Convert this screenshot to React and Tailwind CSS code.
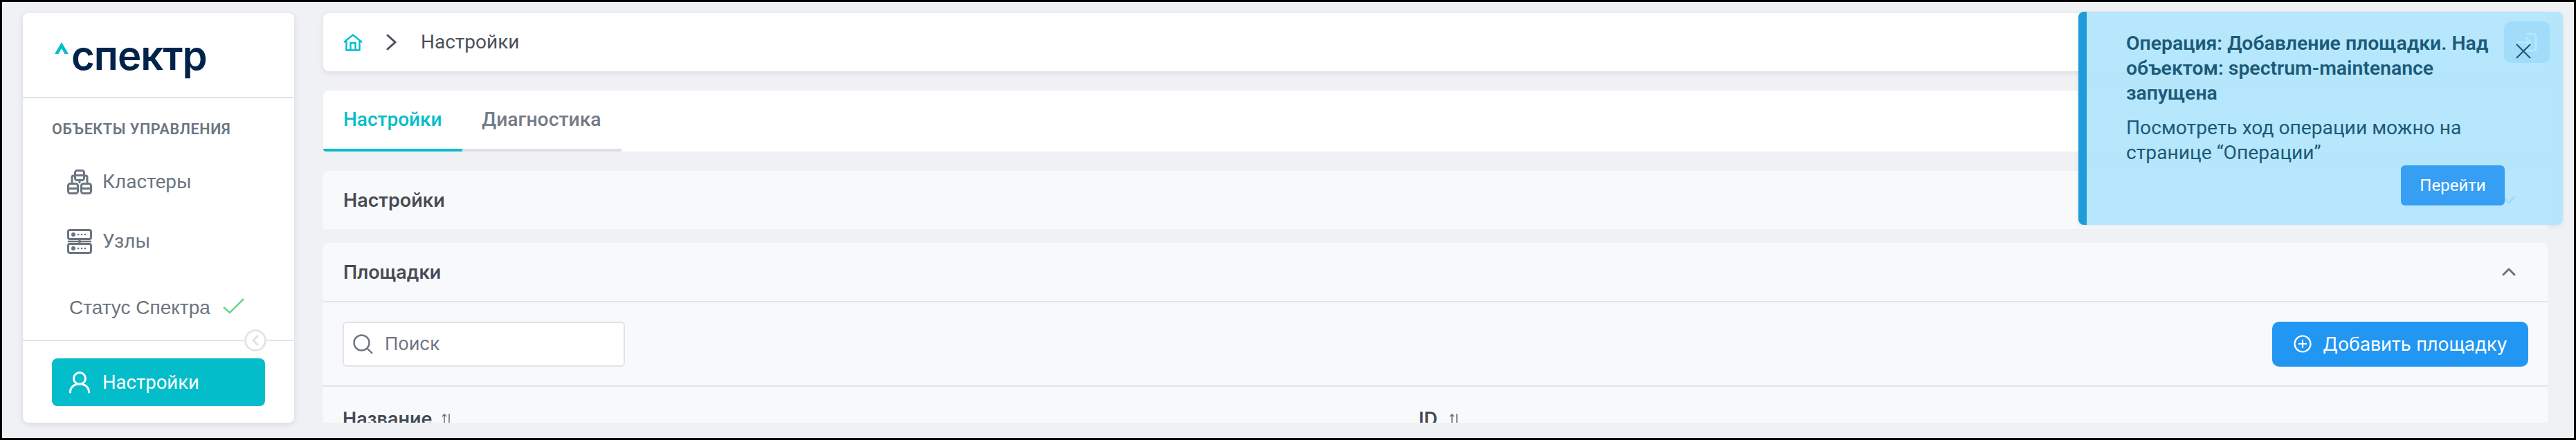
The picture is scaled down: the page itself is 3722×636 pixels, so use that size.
import React from "react";

const roboto = "font-['Roboto',sans-serif]";
const inter = "font-['Inter',sans-serif]";

function ClusterIcon() {
  return (
    <svg width="36" height="36" viewBox="0 0 36 36" fill="none" stroke="#6b7580" strokeWidth="3" strokeLinejoin="round" className="shrink-0">
      <rect x="11.5" y="1.5" width="13" height="14" rx="3" />
      <path d="M11.5 8.5h13" />
      <path d="M11.5 9H9a2 2 0 0 0-2 2v9M24.5 9H27a2 2 0 0 1 2 2v9" />
      <path d="M18 15.5V20" />
      <rect x="1.5" y="20.5" width="14" height="14" rx="3" />
      <path d="M1.5 27.5h14" />
      <rect x="20.5" y="20.5" width="14" height="14" rx="3" />
      <path d="M20.5 27.5h14" />
    </svg>
  );
}

function ServerIcon() {
  return (
    <svg width="36" height="36" viewBox="0 0 36 36" fill="none" stroke="#6b7580" className="shrink-0">
      <rect x="1.5" y="1.5" width="33" height="13" rx="2.5" strokeWidth="3" />
      <rect x="1.5" y="21.5" width="33" height="13" rx="2.5" strokeWidth="3" />
      <path d="M18 15v6" strokeWidth="3" />
      <path d="M1 18h34" strokeWidth="2.5" />
      <g fill="#6b7580" stroke="none">
        <circle cx="9" cy="8" r="3" />
        <circle cx="16" cy="8" r="1.3" />
        <circle cx="21" cy="8" r="1.3" />
        <circle cx="26" cy="8" r="1.3" />
        <circle cx="9" cy="28" r="3" />
        <circle cx="16" cy="28" r="1.3" />
        <circle cx="21" cy="28" r="1.3" />
        <circle cx="26" cy="28" r="1.3" />
      </g>
    </svg>
  );
}

function SortIcon() {
  return (
    <svg width="14" height="18" viewBox="0 0 14 18" fill="none" stroke="#6b7580" strokeWidth="1.6" className="shrink-0">
      <path d="M4 17V2M1 5l3-3 3 3" />
      <path d="M11 1v16" />
    </svg>
  );
}

function Chevron({ d, className }) {
  return (
    <svg width="20" height="12" viewBox="0 0 20 12" fill="none" stroke="#6b7280" strokeWidth="3" strokeLinecap="round" strokeLinejoin="round" className={className}>
      <path d={d} />
    </svg>
  );
}

function NavItem({ icon, label }) {
  return (
    <div className="flex h-[36px] items-center gap-[15px] pl-[64px]">
      {icon}
      <span className={`${roboto} text-[28px] leading-none text-[#6b7580]`}>{label}</span>
    </div>
  );
}

function Sidebar() {
  return (
    <aside className="flex w-[392px] shrink-0 flex-col rounded-[8px] bg-white shadow-[0_2px_8px_rgba(30,40,60,0.12)]">
      <div className="flex h-[123px] shrink-0 items-start border-b-2 border-[#dfe3e8] pl-[46px] pt-[34px]">
        <svg width="20" height="17" viewBox="0 0 20 17" className="mt-[8px] shrink-0">
          <path d="M10 0l10 17h-5.5L10 9l-4.500 8H0z" fill="#04bdca" />
        </svg>
        <span className={`${inter} -mt-[6px] ml-[4px] text-[58px] font-semibold leading-[66px] tracking-[-1px] text-[#00234b]`}>спектр</span>
      </div>
      <div className="flex flex-1 flex-col">
        <div className={`${roboto} ml-[42px] mt-[32px] text-[21.5px] font-semibold leading-[26px] tracking-[0.6px] text-[#6b7580]`}>
          ОБЪЕКТЫ УПРАВЛЕНИЯ
        </div>
        <div className="mt-[45px] flex flex-col gap-[50px]">
          <NavItem icon={<ClusterIcon />} label="Кластеры" />
          <NavItem icon={<ServerIcon />} label="Узлы" />
        </div>
        <div className="ml-[67px] mt-[63px] flex h-[30px] items-center gap-[18px]">
          <span className="font-['Liberation_Sans',sans-serif] text-[28px] leading-none text-[#6b7580]">Статус Спектра</span>
          <svg width="31" height="23" viewBox="0 0 31 23" fill="none" stroke="#6dd58c" strokeWidth="2.5" className="-mt-[6px]">
            <path d="M1 13l9 8L30 1" />
          </svg>
        </div>
      </div>
      <div className="relative flex h-[120px] shrink-0 flex-col border-t-2 border-[#e3e5ea] px-[42px] pt-[25px]">
        <div className="absolute left-[320px] top-[-17px] flex h-[32px] w-[32px] items-center justify-center rounded-full border-[3px] border-[#e3e5ea] bg-white">
          <svg width="12" height="18" viewBox="0 0 12 18" fill="none" stroke="#e0e3e8" strokeWidth="3">
            <path d="M10 2L3 9l7 7" />
          </svg>
        </div>
        <div className="flex h-[69px] items-center gap-[18px] rounded-[8px] bg-[#04bdca] pl-[25px]">
          <svg width="30" height="32" viewBox="0 0 30 32" fill="none" stroke="#ffffff" strokeWidth="3" strokeLinecap="round" className="shrink-0">
            <circle cx="15" cy="10" r="8.5" />
            <path d="M1.500 30c0-7.500 6-12 13.500-12s13.500 4.500 13.500 12" />
          </svg>
          <span className={`${roboto} text-[27.5px] leading-none text-white`}>Настройки</span>
        </div>
      </div>
    </aside>
  );
}

function Breadcrumb() {
  return (
    <div className="flex h-[84px] shrink-0 items-center rounded-[8px] bg-white pl-[29px] shadow-[0_2px_8px_rgba(30,40,60,0.1)]">
      <svg width="28" height="25" viewBox="0 0 28 25" fill="none" stroke="#04bdca" strokeWidth="2.4" className="shrink-0">
        <path d="M1 12L14 1.500 27 12" />
        <path d="M4.500 10v13.500h19V10" />
        <path d="M10.500 23.500V13h7v10.500" />
      </svg>
      <svg width="15" height="24" viewBox="0 0 15 24" fill="none" stroke="#4b5059" strokeWidth="3" strokeLinecap="round" className="ml-[34px] shrink-0">
        <path d="M2 2l11 10L2 22" />
      </svg>
      <span className={`${roboto} ml-[35px] text-[28px] leading-none text-[#4b5059]`}>Настройки</span>
      <div className="-mr-[3px] ml-auto flex h-[60px] w-[66px] items-center justify-center rounded-[10px] bg-[#2196f3]">
        <svg width="30" height="28" viewBox="0 0 30 28" fill="none" stroke="#ffffff" strokeWidth="3" strokeLinecap="round" strokeLinejoin="round">
          <path d="M16 2h9a3 3 0 0 1 3 3v18a3 3 0 0 1-3 3h-9" />
          <path d="M2 14h18M14 8l6 6-6 6" />
        </svg>
      </div>
    </div>
  );
}

function Tabs() {
  return (
    <div className="mt-[28px] flex h-[88px] shrink-0 rounded-t-[8px] bg-white">
      <div className={`${roboto} flex w-[201px] items-center rounded-bl-[4px] border-b-4 border-[#04bdca] pl-[29px] text-[28px] font-medium leading-none text-[#04bdca]`}>
        Настройки
      </div>
      <div className={`${roboto} flex w-[230px] items-center border-b-4 border-[#dee0e5] pl-[28px] text-[28.3px] font-medium leading-none text-[#737b86]`}>
        Диагностика
      </div>
    </div>
  );
}

function PanelHeader({ title, chevron, className }) {
  return (
    <div className={`flex items-center justify-between pl-[29px] pr-[46px] ${className}`}>
      <span className={`${inter} text-[27px] font-semibold leading-none text-[#454b54]`}>{title}</span>
      <Chevron d={chevron} />
    </div>
  );
}

function Panels() {
  return (
    <>
      <div className="mt-[28px] shrink-0 rounded-t-[8px] bg-[#f8f9fb]">
        <PanelHeader title="Настройки" chevron="M2 2l8 8 8-8" className="h-[84px]" />
      </div>
      <div className="mt-[20px] min-h-0 flex-1 overflow-hidden rounded-t-[8px] bg-[#f8f9fb]">
        <PanelHeader title="Площадки" chevron="M2 10l8-8 8 8" className="h-[86px] border-b-2 border-[#e1e3e8]" />
        <div className="flex h-[122px] items-center justify-between border-b-2 border-[#e1e3e8] pl-[28px] pr-[28px]">
          <div className="flex h-[65px] w-[408px] items-center rounded-[6px] border-2 border-[#e1e3e8] bg-white pl-[13px]">
            <svg width="29" height="29" viewBox="0 0 29 29" fill="none" stroke="#6b7580" strokeWidth="2.4" className="shrink-0">
              <circle cx="12.500" cy="12.500" r="11" />
              <path d="M20.500 20.500L28 28" />
            </svg>
            <span className={`${inter} ml-[17px] text-[26px] leading-none text-[#6b7580]`}>Поиск</span>
          </div>
          <div className="flex h-[65px] w-[370px] items-center gap-[16px] rounded-[10px] bg-[#2196f3] pl-[31px]">
            <svg width="26" height="26" viewBox="0 0 26 26" fill="none" stroke="#ffffff" strokeWidth="2.2" className="shrink-0">
              <circle cx="13" cy="13" r="11.500" />
              <path d="M13 7v12M7 13h12" />
            </svg>
            <span className={`${inter} text-[26.8px] leading-none text-white`}>Добавить площадку</span>
          </div>
        </div>
        <div className="grid grid-cols-[1555px_1fr] pl-[28px] pt-[33px]">
          <div className="flex items-center gap-[14px]">
            <span className={`${inter} text-[27px] font-semibold leading-none text-[#454b54]`}>Название</span>
            <SortIcon />
          </div>
          <div className="flex items-center gap-[17px]">
            <span className={`${inter} text-[27px] font-semibold leading-none text-[#454b54]`}>ID</span>
            <SortIcon />
          </div>
        </div>
      </div>
    </>
  );
}

function Toast() {
  return (
    <div className="absolute left-[3000px] top-[14px] flex h-[308px] w-[700px] overflow-hidden rounded-[8px] bg-[#afe4fc]/90 shadow-[0_2px_6px_rgba(30,40,60,0.08)]">
      <div className="w-[12px] shrink-0 bg-[#1e9cd8]" />
      <div className={`${roboto} relative flex-1 pl-[57px] pr-[96px] pt-[28px] text-[#1b5a78]`}>
        <div className="text-[28.4px] font-semibold leading-[36px]">
          Операция: Добавление площадки. Над объектом: spectrum-maintenance запущена
        </div>
        <div className="mt-[14px] text-[28.2px] leading-[36px]">
          Посмотреть ход операции можно на странице “Операции”
        </div>
        <div className="-mr-[12px] flex justify-end">
          <div className="flex h-[58px] w-[150px] items-center justify-center rounded-[6px] bg-[#369ef3] text-[24px] leading-none text-white">
            Перейти
          </div>
        </div>
        <svg width="22" height="22" viewBox="0 0 22 22" fill="none" stroke="#1b5a78" strokeWidth="2.2" className="absolute right-[46px] top-[46px]">
          <path d="M1 1l20 20M21 1L1 21" />
        </svg>
      </div>
    </div>
  );
}

export default function App() {
  return (
    <div className="relative flex h-[636px] w-[3722px] overflow-hidden border-[3px] border-black bg-[#eff1f5] pb-[22px] pl-[30px] pr-[38px] pt-[16px]">
      <Sidebar />
      <main className="ml-[42px] flex min-w-0 flex-1 flex-col">
        <Breadcrumb />
        <Tabs />
        <Panels />
      </main>
      <Toast />
    </div>
  );
}
